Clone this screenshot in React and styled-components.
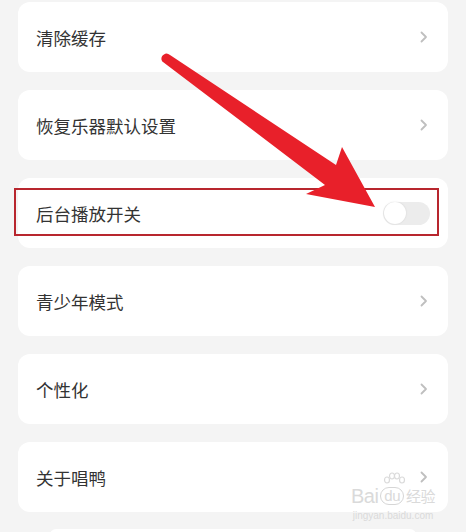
import React from "react";
import styled, { createGlobalStyle } from "styled-components";

const Global = createGlobalStyle`
  html, body { margin: 0; padding: 0; background: #f4f4f4; }
  body { font-family: "Noto Sans CJK SC", "Noto Sans", sans-serif; }
`;

const Page = styled.div`
  position: relative;
  width: 466px;
  height: 532px;
  overflow: hidden;
  background: #f4f4f4;
  box-sizing: border-box;
  padding: 2px 18px 0;
`;

const List = styled.div`
  display: flex;
  flex-direction: column;
  gap: 18px;
`;

const Card = styled.div`
  position: relative;
  height: 70px;
  background: #ffffff;
  border-radius: 12px;
  display: flex;
  align-items: center;
  justify-content: space-between;
  padding: 0 18px 0 18px;
  box-sizing: border-box;
`;

const Label = styled.span`
  font-size: 17.5px;
  color: #333333;
  line-height: 1;
  padding-top: 1px;
`;

const Chevron = styled.svg`
  width: 10px;
  height: 12px;
  margin-right: 1px;
`;

const Track = styled.div`
  width: 47px;
  height: 23px;
  border-radius: 12px;
  background: #ececec;
  display: flex;
  align-items: center;
  padding: 0 1px;
  box-sizing: border-box;
`;

const Knob = styled.div`
  width: 22px;
  height: 22px;
  border-radius: 50%;
  background: #ffffff;
  box-shadow: 0 0 2px rgba(0, 0, 0, 0.12);
`;

const Highlight = styled.div`
  position: absolute;
  left: -4px;
  top: 10px;
  width: 425px;
  height: 48px;
  border: 2px solid #b8262e;
  box-sizing: border-box;
  pointer-events: none;
`;

const Peek = styled.div`
  margin: 17px 32px 0;
  height: 20px;
  background: #ffffff;
  border-radius: 6px 6px 0 0;
`;

const Arrow = styled.svg`
  position: absolute;
  left: 0;
  top: 0;
  width: 466px;
  height: 532px;
  pointer-events: none;
`;

const Watermark = styled.div`
  position: absolute;
  left: 346px;
  top: 472px;
  width: 94px;
  color: #dadada;
  font-family: "Liberation Sans", sans-serif;
  text-align: center;
  pointer-events: none;
  display: flex;
  flex-direction: column;
  align-items: center;
`;

const Paw = styled.svg`
  width: 24px;
  height: 14px;
  margin-left: 2px;
`;

const WmTop = styled.div`
  display: flex;
  align-items: center;
  justify-content: center;
  gap: 2px;
  font-size: 20px;
  line-height: 20px;
  letter-spacing: -0.5px;
`;

const WmDu = styled.span`
  border: 1.5px solid #d6d6d6;
  border-radius: 10px;
  padding: 0 3px;
  font-size: 15px;
  line-height: 16px;
`;

const WmCn = styled.span`
  font-family: "Noto Sans CJK SC", sans-serif;
  font-size: 15px;
`;

const WmUrl = styled.div`
  font-size: 10px;
  line-height: 12px;
  margin-top: 4px;
`;

const ChevronIcon = () => (
  <Chevron viewBox="0 0 10 12">
    <path d="M2.5 1.5 L7 6 L2.5 10.5" fill="none" stroke="#bfbfbf" strokeWidth="1.8" strokeLinecap="round" strokeLinejoin="round" />
  </Chevron>
);

const items = [
  { label: "清除缓存" },
  { label: "恢复乐器默认设置" },
  { label: "后台播放开关", toggle: true },
  { label: "青少年模式" },
  { label: "个性化" },
  { label: "关于唱鸭" },
];

export default function App() {
  return (
    <>
      <Global />
      <Page>
        <List>
          {items.map((it) => (
            <Card key={it.label}>
              <Label>{it.label}</Label>
              {it.toggle ? (
                <Track>
                  <Knob />
                </Track>
              ) : (
                <ChevronIcon />
              )}
              {it.toggle && <Highlight />}
            </Card>
          ))}
        </List>
        <Peek />
        <Watermark>
          <Paw viewBox="0 0 24 14">
            <g fill="none" stroke="#dadada" strokeWidth="1.2">
              <ellipse cx="5" cy="8" rx="2.5" ry="3" />
              <ellipse cx="10" cy="4" rx="2.5" ry="3" />
              <ellipse cx="15" cy="4" rx="2.5" ry="3" />
              <ellipse cx="20" cy="8" rx="2.5" ry="3" />
            </g>
          </Paw>
          <WmTop>
            <span>Bai</span>
            <WmDu>du</WmDu>
            <WmCn>经验</WmCn>
          </WmTop>
          <WmUrl>jingyan.baidu.com</WmUrl>
        </Watermark>
        <Arrow viewBox="0 0 466 532">
          <path
            d="M164 54.5 C166 53 168 53.5 170 55 L336 165 L342 147 L375 207 L306 194 L325 185 L163 62 C160.5 60 161 56 164 54.5 Z"
            fill="#e8202a"
          />
        </Arrow>
      </Page>
    </>
  );
}
